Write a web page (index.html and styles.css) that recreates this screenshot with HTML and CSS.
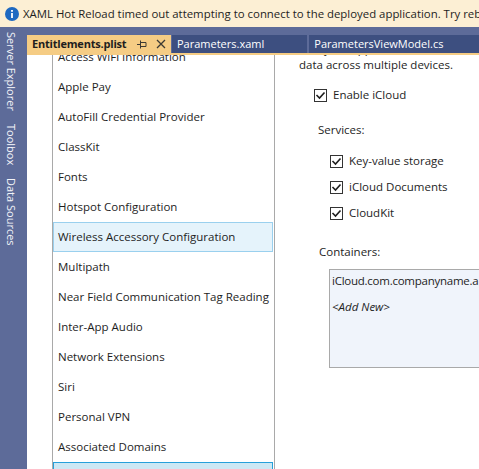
FILE: index.html
```html
<!DOCTYPE html>
<html lang="en">
<head>
    <meta charset="UTF-8">
    <meta name="viewport" content="width=device-width, initial-scale=1.0">
    <title>Entitlements.plist</title>
    <link rel="stylesheet" href="styles.css">
</head>
<body>
    <div class="infobar">
        <svg class="info-icon" width="14" height="14" viewBox="0 0 14 14">
            <circle cx="7" cy="7" r="7" fill="#1e69c1"/>
            <rect x="6.1" y="6" width="1.8" height="5" fill="#fff"/>
            <rect x="6.1" y="3" width="1.8" height="1.8" fill="#fff"/>
        </svg>
        <span>XAML Hot Reload timed out attempting to connect to the deployed application. Try rebuilding and redeploying.</span>
    </div>

    <div class="ide">
        <div class="side-tabs">
            <div class="side-tab">Server Explorer</div>
            <div class="side-tab">Toolbox</div>
            <div class="side-tab">Data Sources</div>
        </div>

        <div class="docwell">
            <div class="doctabs">
                <div class="doctab active">
                    <span>Entitlements.plist</span>
                    <svg class="pin" width="10" height="10" viewBox="0 0 10 10">
                        <path d="M0 5.5H3M3.5 1.5V9.5M3.5 3.5H9V7.5H3.5" fill="none" stroke="#3c3a33" stroke-width="1"/>
                    </svg>
                    <svg class="close" width="10" height="10" viewBox="0 0 10 10">
                        <path d="M1 1L9 9M9 1L1 9" stroke="#3c3a33" stroke-width="1.3"/>
                    </svg>
                </div>
                <div class="doctab">Parameters.xaml</div>
                <div class="doctab">ParametersViewModel.cs</div>
            </div>

            <div class="doc">
                <div class="doc-inner">
                    <ul class="cap-list">
                        <li>Access WiFi Information</li>
                        <li>Apple Pay</li>
                        <li>AutoFill Credential Provider</li>
                        <li>ClassKit</li>
                        <li>Fonts</li>
                        <li>Hotspot Configuration</li>
                        <li class="hover">Wireless Accessory Configuration</li>
                        <li>Multipath</li>
                        <li>Near Field Communication Tag Reading</li>
                        <li>Inter-App Audio</li>
                        <li>Network Extensions</li>
                        <li>Siri</li>
                        <li>Personal VPN</li>
                        <li>Associated Domains</li>
                        <li class="selected">iCloud</li>
                    </ul>

                    <div class="cap-detail">
                        <p class="desc">Lets your app store data in iCloud and keep it up to<br>data across multiple devices.</p>

                        <label class="check enable"><span class="box"><svg width="11" height="11" viewBox="0 0 11 11"><path d="M1.5 5L4.5 8L9.5 2.5" fill="none" stroke="#1e1e1e" stroke-width="1.6"/></svg></span>Enable iCloud</label>

                        <div class="group-label services">Services:</div>
                        <div class="services-list">
                            <label class="check"><span class="box"><svg width="11" height="11" viewBox="0 0 11 11"><path d="M1.5 5L4.5 8L9.5 2.5" fill="none" stroke="#1e1e1e" stroke-width="1.6"/></svg></span>Key-value storage</label>
                            <label class="check"><span class="box"><svg width="11" height="11" viewBox="0 0 11 11"><path d="M1.5 5L4.5 8L9.5 2.5" fill="none" stroke="#1e1e1e" stroke-width="1.6"/></svg></span>iCloud Documents</label>
                            <label class="check"><span class="box"><svg width="11" height="11" viewBox="0 0 11 11"><path d="M1.5 5L4.5 8L9.5 2.5" fill="none" stroke="#1e1e1e" stroke-width="1.6"/></svg></span>CloudKit</label>
                        </div>

                        <div class="group-label containers">Containers:</div>
                        <div class="container-box">
                            <div class="container-id">iCloud.com.companyname.app</div>
                            <div class="add-new">&lt;Add New&gt;</div>
                        </div>
                    </div>
                </div>
            </div>
        </div>
    </div>
</body>
</html>
```

FILE: styles.css
```css
html, body {
    margin: 0;
    height: 100%;
}
body {
    display: flex;
    flex-direction: column;
    overflow: hidden;
    font-family: "Open Sans", "Noto Sans", sans-serif;
    font-size: 11.5px;
    color: #1e1e1e;
}
.infobar {
    flex: none;
    height: 27px;
    display: flex;
    align-items: center;
    gap: 4px;
    padding-left: 5px;
    background: #fcefd4;
    white-space: nowrap;
    overflow: hidden;
    font-size: 11.4px;
}
.info-icon {
    flex: none;
}
.ide {
    flex: 1;
    display: flex;
    min-height: 0;
    background: #5d6b99;
}
.side-tabs {
    flex: none;
    width: 27px;
    display: flex;
    flex-direction: column;
    align-items: flex-start;
    gap: 13px;
    padding-top: 5px;
}
.side-tab {
    writing-mode: vertical-rl;
    width: 16px;
    line-height: 16px;
    margin-left: 3px;
    font-size: 11px;
    color: #f2f3f8;
    white-space: nowrap;
}
.docwell {
    flex: 1;
    min-width: 0;
    display: flex;
    flex-direction: column;
    padding-top: 8px;
}
.doctabs {
    flex: none;
    display: flex;
    height: 18px;
    border-bottom: 2px solid #f5cc84;
    white-space: nowrap;
    overflow: hidden;
    font-size: 11px;
}
.doctab {
    flex: none;
    line-height: 18px;
    padding: 0 43px 0 5px;
    margin-right: 2px;
    background: #3d4f80;
    color: #fff;
}
.doctab.active {
    display: flex;
    align-items: center;
    box-sizing: border-box;
    width: 144px;
    padding-right: 5px;
    margin-right: 1px;
    background: #f5cc84;
    color: #1e1e1e;
    font-weight: 700;
    letter-spacing: -0.2px;
}
.doctab .pin {
    margin-left: auto;
}
.doctab .close {
    margin-left: 9px;
}
.doc {
    flex: 1;
    min-height: 0;
    overflow: hidden;
    background: #fff;
}
.doc-inner {
    display: flex;
    margin-top: -13px;
    padding-left: 25px;
}
.cap-list {
    flex: none;
    width: 221px;
    margin: 0;
    padding: 0;
    list-style: none;
    border-left: 1px solid #a9a9a9;
    border-right: 1px solid #a9a9a9;
}
.cap-list li {
    box-sizing: border-box;
    height: 30px;
    line-height: 28px;
    margin-right: 1px;
    padding-left: 4px;
    border: 1px solid transparent;
    white-space: nowrap;
}
.cap-list li.hover {
    background: #e5f3fb;
    border-color: #9ad0ee;
}
.cap-list li.selected {
    background: #cce8f4;
    border-color: #26a0da;
}
.cap-detail {
    flex: 1;
    min-width: 0;
    padding-left: 24px;
    white-space: nowrap;
    line-height: 16px;
}
.desc {
    margin: -1px 0 0;
}
.check {
    display: flex;
    align-items: center;
    height: 16px;
}
.check .box {
    box-sizing: border-box;
    width: 13px;
    height: 13px;
    margin-right: 6px;
    border: 1px solid #333;
    background: #fff;
}
.check .box svg {
    display: block;
}
.enable {
    margin: 14px 0 0 15px;
}
.group-label {
    padding-left: 19px;
}
.services {
    margin-top: 19px;
}
.services-list {
    margin-top: 10px;
    padding-left: 31px;
}
.services-list .check {
    height: 26px;
}
.containers {
    margin-top: 18px;
    padding-left: 20px;
}
.container-box {
    width: 200px;
    height: 99px;
    box-sizing: border-box;
    margin: 9px 0 0 30px;
    padding: 3px 2px;
    border: 1px solid #a9a9a9;
    background: #f0f4fb;
}
.container-id {
    letter-spacing: -0.25px;
}
.add-new {
    margin-top: 10px;
    font-style: italic;
}
```
